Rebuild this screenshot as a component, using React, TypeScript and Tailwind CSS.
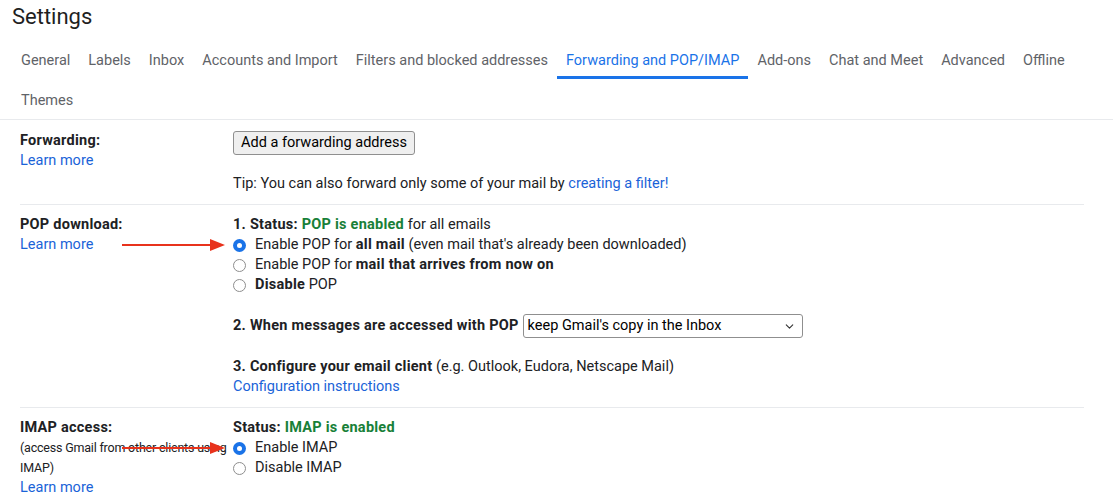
import { ChevronDown } from "lucide-react";
import type { ReactNode } from "react";

const tabs = [
  "General",
  "Labels",
  "Inbox",
  "Accounts and Import",
  "Filters and blocked addresses",
  "Forwarding and POP/IMAP",
  "Add-ons",
  "Chat and Meet",
  "Advanced",
  "Offline",
  "Themes",
];

function B({ children, className = "" }: { children: ReactNode; className?: string }) {
  return <b className={`font-bold tracking-[0.25px] ${className}`}>{children}</b>;
}

function Radio({ checked }: { checked?: boolean }) {
  if (checked) {
    return (
      <span className="mr-[9px] flex h-[13px] w-[13px] shrink-0 items-center justify-center rounded-full bg-[#1a73e8]">
        <span className="h-[5px] w-[5px] rounded-full bg-white" />
      </span>
    );
  }
  return <span className="mr-[9px] h-[13px] w-[13px] shrink-0 rounded-full border border-[#8e8e8e] bg-white" />;
}

function Arrow() {
  return (
    <div className="absolute left-[102px] top-[34px] flex items-center">
      <div className="h-[2px] w-[88px] bg-[#e8321c]" />
      <svg width="15" height="12" viewBox="0 0 15 12">
        <polygon points="0,0 15,6 0,12" fill="#e8321c" />
      </svg>
    </div>
  );
}

export default function App() {
  return (
    <div className="h-[498px] w-[1113px] overflow-hidden bg-white font-['Roboto',sans-serif] text-[#202124]">
      <h1 className="pl-3 pt-[3px] text-[22px] leading-[28px] text-[#1f1f1f]">Settings</h1>
      <nav className="mt-[8px] flex w-full flex-wrap border-b border-[#e8eaed] pl-3">
        {tabs.map((t) => {
          const active = t === "Forwarding and POP/IMAP";
          return (
            <div
              key={t}
              className={`flex h-10 items-center border-b-[3px] px-[9px] pt-[7px] text-[14.5px] ${
                active ? "border-[#1a73e8] text-[#1a73e8]" : "border-transparent text-[#5f6368]"
              }`}
            >
              {t}
            </div>
          );
        })}
      </nav>

      <div className="ml-5 w-[1064px] text-[14.5px] leading-5">
        {/* Forwarding */}
        <section className="grid grid-cols-[213px_1fr] border-b border-[#e8eaed] pb-[10px] pt-[11px]">
          <div>
            <B>Forwarding:</B>
            <div>
              <a className="text-[#1a63d8]">Learn more</a>
            </div>
          </div>
          <div>
            <button className="h-[24px] rounded-[3px] border border-[#8f8f8f] bg-[#efefef] px-[7px] text-[14.5px] leading-5 text-black">
              Add a forwarding address
            </button>
            <p className="mt-[19px]">
              Tip: You can also forward only some of your mail by{" "}
              <a className="text-[#1a63d8]">creating a filter!</a>
            </p>
          </div>
        </section>

        {/* POP download */}
        <section className="relative grid grid-cols-[213px_1fr] border-b border-[#e8eaed] pb-[10px] pt-[10px]">
          <div>
            <B>POP download:</B>
            <div>
              <a className="text-[#1a63d8]">Learn more</a>
            </div>
          </div>
          <Arrow />
          <div>
            <div>
              <B>1. Status: </B>
              <B className="text-[#188038]">POP is enabled</B> for all emails
            </div>
            <label className="flex items-center">
              <Radio checked />
              <span>
                Enable POP for <B>all mail</B> (even mail that's already been downloaded)
              </span>
            </label>
            <label className="flex items-center">
              <Radio />
              <span>
                Enable POP for <B>mail that arrives from now on</B>
              </span>
            </label>
            <label className="flex items-center">
              <Radio />
              <span>
                <B>Disable</B> POP
              </span>
            </label>
            <div className="mt-[19px] flex items-center">
              <B className="mr-1">2. When messages are accessed with POP</B>
              <div className="flex h-[24px] w-[280px] items-center justify-between rounded-[3px] border border-[#8f8f8f] pl-[4px] pr-[6px] text-black">
                <span>keep Gmail's copy in the Inbox</span>
                <ChevronDown size={13} strokeWidth={2} className="text-[#333]" />
              </div>
            </div>
            <div className="mt-[19px]">
              <B>3. Configure your email client</B> (e.g. Outlook, Eudora, Netscape Mail)
            </div>
            <a className="text-[#1a63d8]">Configuration instructions</a>
          </div>
        </section>

        {/* IMAP */}
        <section className="relative grid grid-cols-[213px_1fr] pt-[10px]">
          <div>
            <B>IMAP access:</B>
            <div className="w-[214px] text-[12.5px] tracking-[-0.2px]">
              (access Gmail from other clients using IMAP)
            </div>
            <a className="text-[#1a63d8]">Learn more</a>
          </div>
          <Arrow />
          <div>
            <div>
              <B>Status: </B>
              <B className="text-[#188038]">IMAP is enabled</B>
            </div>
            <label className="flex items-center">
              <Radio checked />
              <span>Enable IMAP</span>
            </label>
            <label className="flex items-center">
              <Radio />
              <span>Disable IMAP</span>
            </label>
          </div>
        </section>
      </div>
    </div>
  );
}
